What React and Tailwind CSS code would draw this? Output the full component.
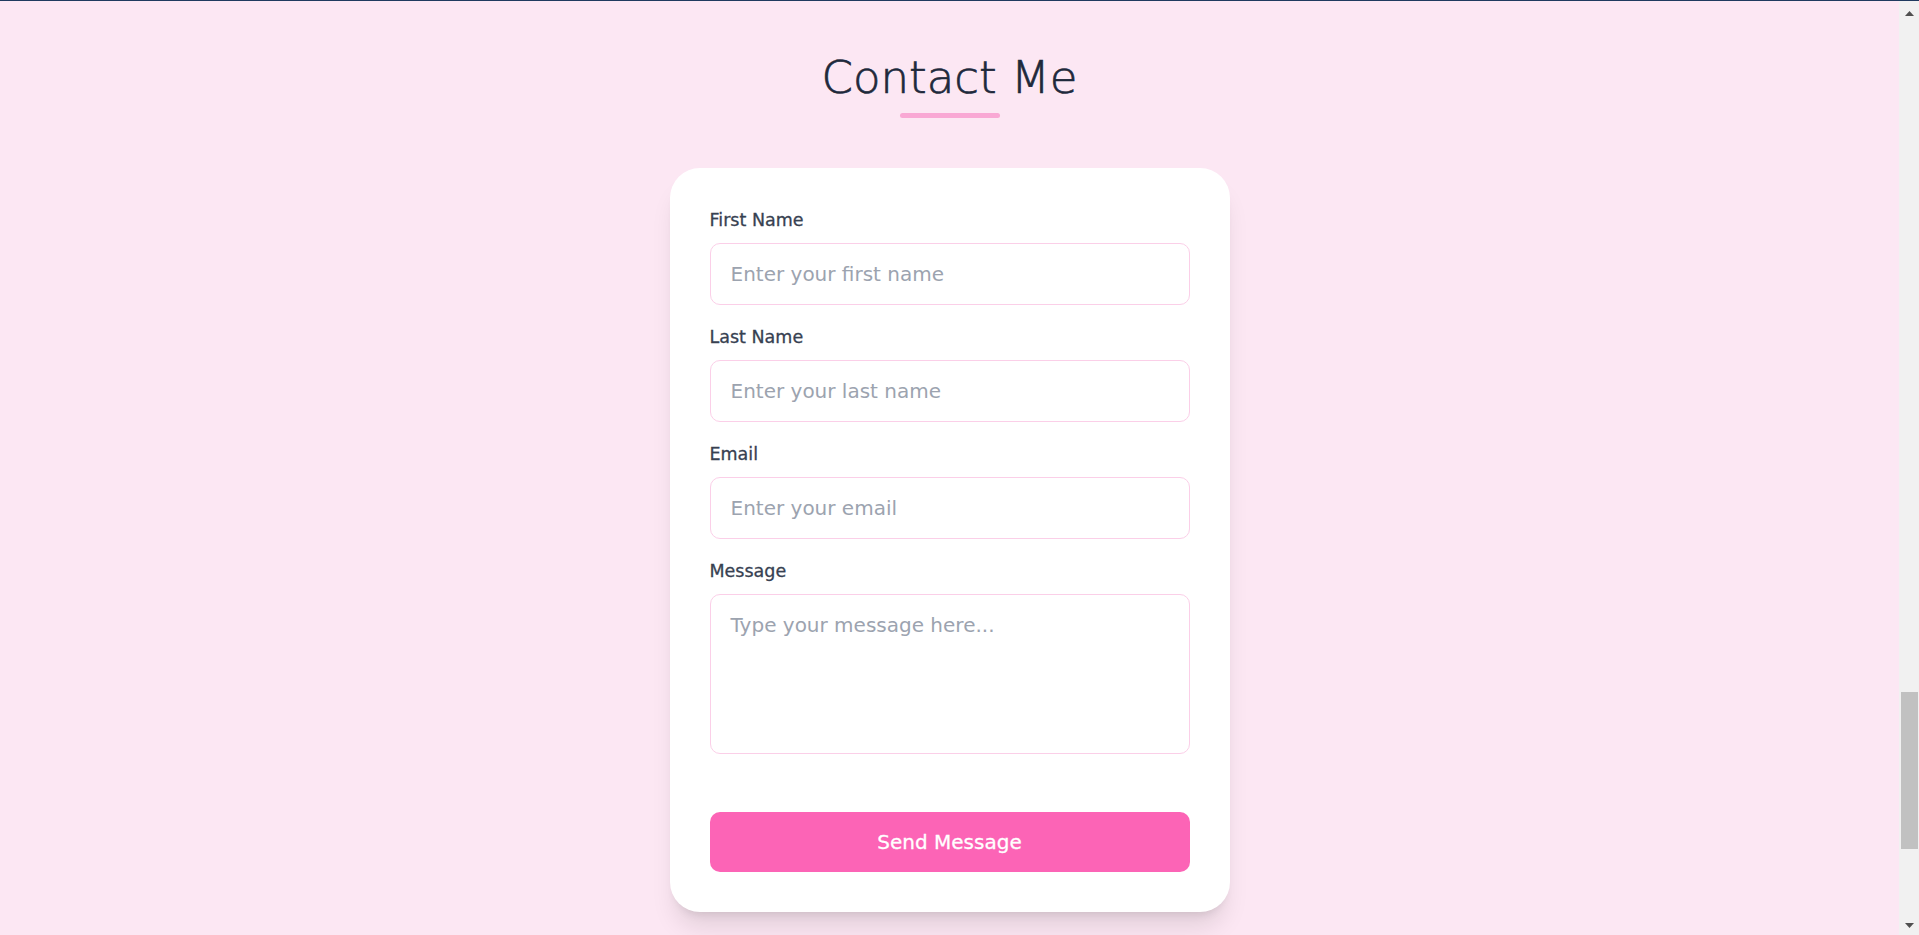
import React from "react";

const fields = [
  { id: "firstName", label: "First Name", type: "text", placeholder: "Enter your first name" },
  { id: "lastName", label: "Last Name", type: "text", placeholder: "Enter your last name" },
  { id: "email", label: "Email", type: "email", placeholder: "Enter your email" },
];

const labelClass =
  "mb-[10px] block text-[17.5px] leading-[25px] font-medium text-[#374151] [-webkit-text-stroke:0.3px_#374151]";

const inputClass =
  "block w-full rounded-[10px] border border-[#fbcfe8] bg-white px-5 py-[15px] text-[20px] leading-[30px] text-[#1e293b] placeholder:text-[#9ca3af] outline-none";

const Scrollbar = () => (
  <div className="w-5 shrink-0 bg-[#f1f1f1] flex flex-col">
    <div className="h-[16px] pb-px flex items-end justify-center">
      <svg width="9" height="5" viewBox="0 0 9 5">
        <polygon points="0,5 4.5,0 9,5" fill="#505050" />
      </svg>
    </div>
    <div className="flex-1 flex flex-col pl-[2px] pr-px">
      <div className="mt-[675px] h-[157px] bg-[#c1c1c1]" />
    </div>
    <div className="h-[12px] flex items-start justify-center">
      <svg width="9" height="5" viewBox="0 0 9 5">
        <polygon points="0,0 9,0 4.5,5" fill="#505050" />
      </svg>
    </div>
  </div>
);

const App = () => {
  return (
    <div className="h-screen overflow-hidden flex flex-col bg-[#fce7f3] font-['DejaVu_Sans',sans-serif]">
      <div className="h-px shrink-0 bg-[#1f3a5f]" />
      <div className="flex flex-1 min-h-0">
        {/* Contact Section */}
        <main className="flex-1 flex flex-col items-center pt-[52px]">
          <h2 className="text-[45px] leading-[50px] font-light text-[#1e293b] [-webkit-text-stroke:0.7px_#1e293b]">
            Contact Me
          </h2>
          <div className="mt-[10px] h-[5px] w-[100px] rounded-full bg-[#f9a8d4]" />

          <form
            className="mt-[50px] w-[560px] rounded-[30px] bg-white p-10 shadow-xl"
            onSubmit={(e) => e.preventDefault()}
          >
            {fields.map((field) => (
              <div key={field.id} className="mb-5">
                <label htmlFor={field.id} className={labelClass}>
                  {field.label}
                </label>
                <input id={field.id} type={field.type} placeholder={field.placeholder} className={inputClass} />
              </div>
            ))}

            <div>
              <label htmlFor="message" className={labelClass}>
                Message
              </label>
              <textarea
                id="message"
                placeholder="Type your message here..."
                className={inputClass + " h-[160px] resize-none"}
              />
            </div>

            <button
              type="submit"
              className="mt-[58px] block w-full rounded-[10px] bg-[#fc64b6] py-[15px] text-[20px] leading-[30px] font-medium text-white [-webkit-text-stroke:0.3px_#ffffff]"
            >
              Send Message
            </button>
          </form>
        </main>

        <Scrollbar />
      </div>
    </div>
  );
};

export default App;
